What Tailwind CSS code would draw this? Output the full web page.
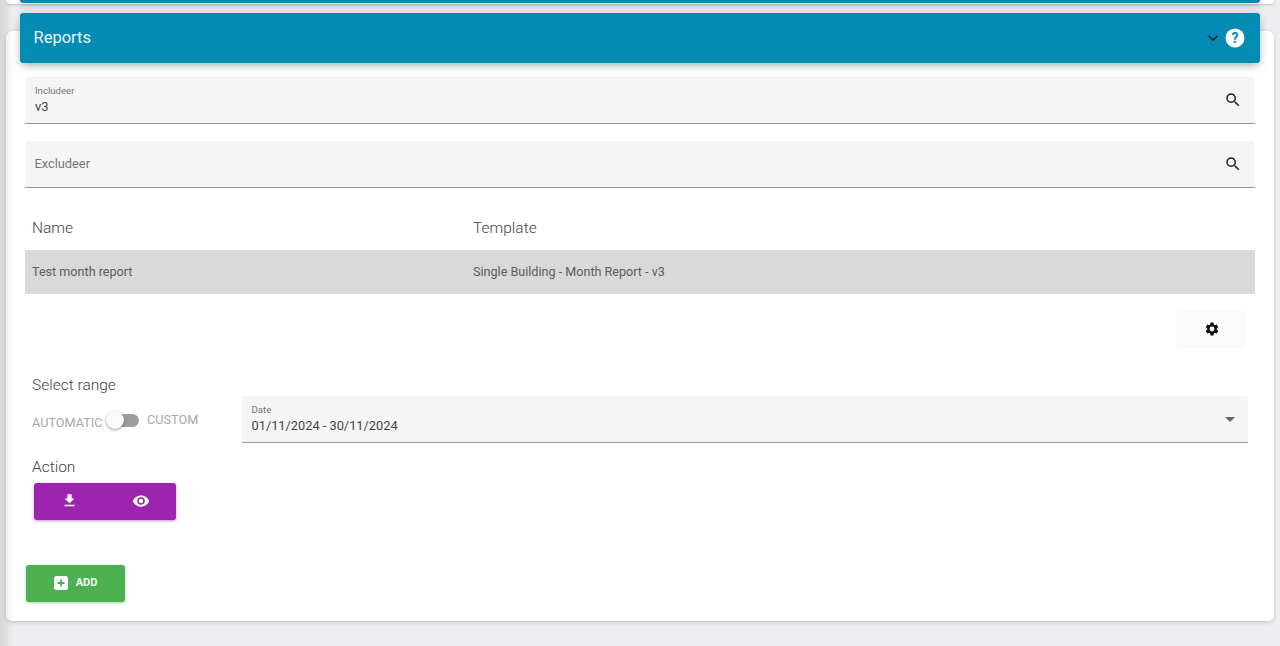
<!DOCTYPE html>
<html>
<head>
<meta charset="utf-8">
<script src="https://cdn.jsdelivr.net/npm/@tailwindcss/browser@4"></script>
</head>
<body class="relative m-0 h-[646px] overflow-hidden bg-[#eeedef] font-['Roboto',sans-serif]">
  <div class="mx-[6px] h-[4px] rounded-b-md bg-white shadow-[0_1px_3px_rgba(0,0,0,0.2)]">
    <div class="mx-[14px] h-[3px] rounded-b-sm bg-[#048bb4] shadow-[0_2px_6px_rgba(0,0,0,0.3)]"></div>
  </div>
  <div class="mx-[6px] mt-[27px] h-[590px] rounded-md bg-white shadow-[0_1px_4px_rgba(0,0,0,0.2)]">
    <div class="relative top-[-18px] mx-[14px] -mb-[18px] flex h-[50px] items-center justify-between rounded-[3px] bg-[#048bb4] pl-[13.5px] pr-[15px] shadow-[0_4px_10px_-2px_rgba(0,60,90,0.35),0_0_10px_rgba(0,0,0,0.1)]">
      <span class="text-[16.5px] font-normal text-[#eaf6fa]">Reports</span>
      <div class="flex items-center gap-[2px]">
        <svg class="h-[20px] w-[20px]" viewBox="0 0 24 24" fill="#10202a"><path d="M7.41 8.59 12 13.17l4.59-4.58L18 10l-6 6-6-6z"/></svg>
        <svg class="h-[20px] w-[20px]" viewBox="0 0 20 20"><circle cx="10" cy="10" r="9.5" fill="#fff"/><text x="10" y="15" text-anchor="middle" font-size="14" font-weight="700" font-family="Roboto" fill="#048bb4">?</text></svg>
      </div>
    </div>
    <div class="px-[19px] pt-[14px]">
      <div class="flex h-[47px] items-center justify-between rounded-t border-b border-[#9a9a9a] bg-[#f5f5f5] pl-[10px] pr-[13px]">
        <div class="flex flex-col">
          <span class="relative top-[-1px] text-[9.6px] leading-[12px] text-[#757575]">Includeer</span>
          <span class="mt-[1px] text-[13px] leading-[15px] text-[#444]">v3</span>
        </div>
        <svg class="h-[18px] w-[18px]" viewBox="0 0 24 24" fill="#222"><path d="M15.5 14h-.79l-.28-.27A6.47 6.47 0 0 0 16 9.5 6.5 6.5 0 1 0 9.5 16c1.61 0 3.09-.59 4.23-1.57l.27.28v.79l5 4.99L20.49 19l-4.99-5zm-6 0C7.01 14 5 11.99 5 9.5S7.01 5 9.5 5 14 7.01 14 9.5 11.99 14 9.5 14z"/></svg>
      </div>
      <div class="mt-[17px] flex h-[47px] items-center justify-between rounded-t border-b border-[#9a9a9a] bg-[#f5f5f5] pl-[9.5px] pr-[13px]">
        <span class="text-[12.8px] text-[#757575]">Excludeer</span>
        <svg class="h-[18px] w-[18px]" viewBox="0 0 24 24" fill="#222"><path d="M15.5 14h-.79l-.28-.27A6.47 6.47 0 0 0 16 9.5 6.5 6.5 0 1 0 9.5 16c1.61 0 3.09-.59 4.23-1.57l.27.28v.79l5 4.99L20.49 19l-4.99-5zm-6 0C7.01 14 5 11.99 5 9.5S7.01 5 9.5 5 14 7.01 14 9.5 11.99 14 9.5 14z"/></svg>
      </div>
      <div class="mt-[17px] flex h-[45px] items-center pt-[2px] text-[15.5px] font-light text-[#444]">
        <span class="w-[448px] pl-[7px]">Name</span>
        <span>Template</span>
      </div>
      <div class="flex h-[44px] items-center bg-[#d9d9d9] text-[12.6px] text-[#5c5c5c]">
        <span class="w-[448px] pl-[7px]">Test month report</span>
        <span>Single Building - Month Report - v3</span>
      </div>
      <div class="mt-[17px] flex justify-end pr-[8px]">
        <div class="flex h-[37px] w-[71px] items-center justify-center rounded bg-[#fafafa] pb-[2px]">
          <svg class="h-[16px] w-[16px]" viewBox="0 0 24 24" fill="#111"><path d="M19.14 12.94c.04-.3.06-.61.06-.94s-.02-.64-.07-.94l2.03-1.58a.49.49 0 0 0 .12-.61l-1.92-3.32a.49.49 0 0 0-.59-.22l-2.39.96a7 7 0 0 0-1.62-.94l-.36-2.54a.48.48 0 0 0-.48-.41h-3.84a.47.47 0 0 0-.47.41l-.36 2.54c-.59.24-1.13.57-1.62.94l-2.39-.96a.48.48 0 0 0-.59.22L2.74 8.87a.47.47 0 0 0 .12.61l2.03 1.58c-.05.3-.09.63-.09.94s.02.64.07.94l-2.03 1.58a.49.49 0 0 0-.12.61l1.92 3.32c.12.22.37.29.59.22l2.39-.96c.5.38 1.03.7 1.62.94l.36 2.54c.05.24.24.41.48.41h3.84c.24 0 .44-.17.47-.41l.36-2.54a7 7 0 0 0 1.62-.94l2.39.96c.22.08.47 0 .59-.22l1.92-3.32a.47.47 0 0 0-.12-.61l-2.01-1.58zM12 15.6A3.6 3.6 0 1 1 12 8.4a3.6 3.6 0 0 1 0 7.2z"/></svg>
        </div>
      </div>
      <div class="mt-[27px] pl-[7px] text-[15.5px] font-light leading-[20px] text-[#444]">Select range</div>
      <div class="mt-[1px] flex items-start pr-[7px]">
        <div class="relative flex h-[47px] w-[217px] shrink-0 text-[12.7px] text-[#a8a8a8]">
          <span class="absolute left-[7px] top-[20px] leading-[14px]">AUTOMATIC</span>
          <span class="absolute left-[88px] top-[18px] h-[13px] w-[26px] rounded-full bg-[#9e9e9e]"></span>
          <span class="absolute left-[81px] top-[15px] h-[18px] w-[18px] rounded-full bg-[#fafafa] shadow-[0_1px_3px_rgba(0,0,0,0.4)]"></span>
          <span class="absolute left-[122px] top-[17px] leading-[14px]">CUSTOM</span>
        </div>
        <div class="flex h-[47px] flex-1 items-center justify-between rounded-t border-b border-[#9a9a9a] bg-[#f5f5f5] pl-[9.5px] pr-[13px]">
          <div class="relative top-[-1px] flex flex-col">
            <span class="text-[9.6px] leading-[12px] text-[#757575]">Date</span>
            <span class="mt-[2px] text-[12.8px] leading-[15px] text-[#444]">01/11/2024 - 30/11/2024</span>
          </div>
          <span class="h-0 w-0 border-x-[5px] border-t-[5px] border-x-transparent border-t-[#666]"></span>
        </div>
      </div>
      <div class="mt-[14px] pl-[7px] text-[15.5px] font-light leading-[20px] text-[#444]">Action</div>
      <div class="ml-[9px] mt-[6px] flex h-[37px] w-[142px]">
        <div class="flex flex-1 items-center justify-center rounded-l-[3px] bg-[#9c24ae] pb-[2px] shadow-[0_1px_3px_rgba(156,33,172,0.5)]">
          <svg class="h-[17px] w-[17px]" viewBox="0 0 24 24" fill="#fff"><path d="M19 9h-4V3H9v6H5l7 7 7-7zM5 18v2h14v-2H5z"/></svg>
        </div>
        <div class="flex flex-1 items-center justify-center rounded-r-[3px] bg-[#9c24ae] pb-[1px] shadow-[0_1px_3px_rgba(156,33,172,0.5)]">
          <svg class="h-[18px] w-[18px]" viewBox="0 0 24 24" fill="#fff"><path d="M12 4.5C7 4.5 2.73 7.61 1 12c1.73 4.39 6 7.5 11 7.5s9.27-3.11 11-7.5c-1.73-4.39-6-7.5-11-7.5zM12 17a5 5 0 1 1 0-10 5 5 0 0 1 0 10zm0-8a3 3 0 1 0 0 6 3 3 0 0 0 0-6z"/></svg>
        </div>
      </div>
      <div class="ml-px mt-[45px] flex h-[37px] w-[99px] items-center justify-center gap-[8px] rounded-[3px] bg-[#4caf50] shadow-[0_1px_3px_rgba(76,175,80,0.5)]">
        <svg class="relative top-[-1px] h-[14px] w-[14px]" viewBox="0 0 14 14"><rect width="14" height="14" rx="2.5" fill="#fff"/><path d="M3.5 7h7M7 3.5v7" stroke="#4caf50" stroke-width="1.8"/></svg>
        <span class="text-[11px] font-bold text-[#f3faf3]">ADD</span>
      </div>
    </div>
  </div>
  <div class="pointer-events-none absolute left-0 top-0 h-full w-[14px] bg-gradient-to-r from-black/10 to-transparent"></div>
</body>
</html>
